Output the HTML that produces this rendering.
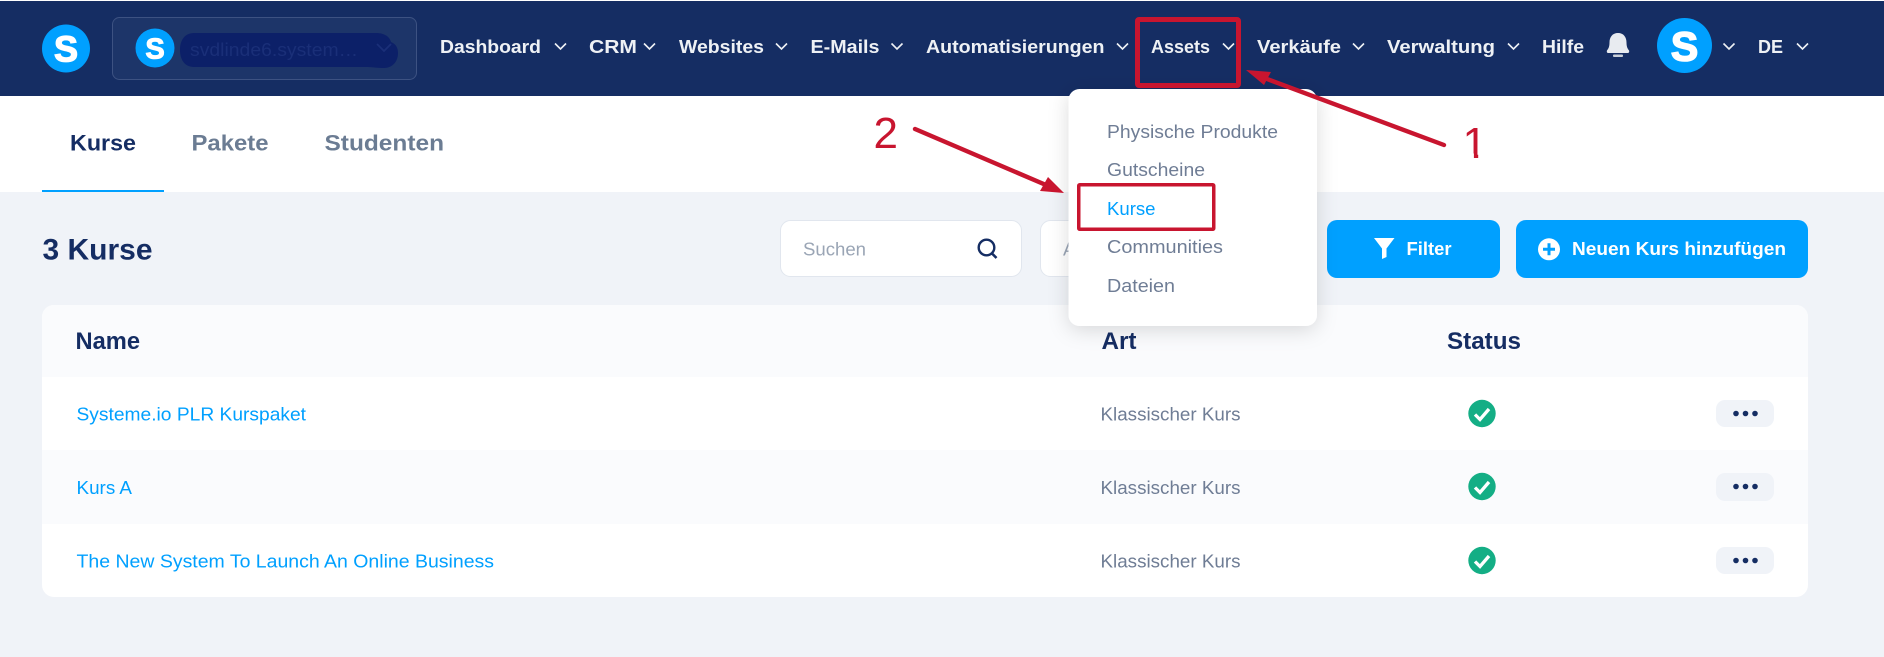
<!DOCTYPE html>
<html lang="de">
<head>
<meta charset="utf-8">
<title>Kurse</title>
<style>
html,body{margin:0;padding:0;background:#f0f3f8;width:1884px;height:657px;overflow:hidden}
svg{display:block}
text{font-family:"Liberation Sans",sans-serif}
.nav{font-size:18.5px;font-weight:700;fill:#eef1f5}
.tab{font-size:22.5px;font-weight:700}
.th{font-size:24px;font-weight:700;fill:#152d63}
.link{font-size:18.5px;fill:#00a0ff}
.mut{font-size:18.5px;fill:#6f7d95}
.btn{font-size:18.5px;font-weight:700;fill:#fff}
.chev{fill:none;stroke:#eef1f5;stroke-width:1.6}
.s{font-weight:700;fill:#fff;stroke:#fff;text-anchor:middle}
.num{font-size:44px;fill:#c8152f}
</style>
</head>
<body>
<svg width="1884" height="657" viewBox="0 0 1884 657" xmlns="http://www.w3.org/2000/svg">
<defs>
<filter id="sh" x="-20%" y="-20%" width="140%" height="140%"><feDropShadow dx="0" dy="4" stdDeviation="10" flood-color="#000" flood-opacity=".14"/></filter>
<clipPath id="one"><rect x="1455" y="120" width="35" height="33.500"/><rect x="1473.900" y="150" width="4.300" height="12"/></clipPath>
</defs>
<rect width="1884" height="657" fill="#f0f3f8"/>
<rect width="1884" height="1" fill="#fff"/>
<rect y="1" width="1884" height="95" fill="#152d63"/>
<rect y="96" width="1884" height="96" fill="#fff"/>

<circle cx="66" cy="48.5" r="24" fill="#00a0ff"/>
<text class="s" x="66" y="61.500" font-size="36" stroke-width="1.300">S</text>

<rect x="112.5" y="17.5" width="304" height="62" rx="7" fill="#1d3569" stroke="#3d5282"/>
<circle cx="155" cy="48" r="19.5" fill="#00a0ff"/>
<text class="s" x="155" y="58.500" font-size="29" stroke-width="1">S</text>
<path d="M194 33H376c10 0 14 5 15 9 5 2 7 6 7 11 0 9-6 15-14 15-8 0-12-1-18-1H194c-9 0-14-7-14-17s5-17 14-17z" fill="#0c2068"/>
<text x="190" y="56" font-size="18.5" fill="#1a2f78" textLength="168" lengthAdjust="spacingAndGlyphs">svdlinde6.system…</text>
<path d="M377 44l7 7 7-7" fill="none" stroke="#1a2f78" stroke-width="1.8"/>

<text class="nav" x="440" y="53" textLength="101" lengthAdjust="spacingAndGlyphs">Dashboard</text>
<path class="chev" d="M555 43.5l5.5 5.5 5.5-5.5"/>
<text class="nav" x="589" y="53" textLength="48" lengthAdjust="spacingAndGlyphs">CRM</text>
<path class="chev" d="M644 43.5l5.5 5.5 5.5-5.5"/>
<text class="nav" x="679" y="53" textLength="85" lengthAdjust="spacingAndGlyphs">Websites</text>
<path class="chev" d="M776 43.5l5.5 5.5 5.5-5.5"/>
<text class="nav" x="810.5" y="53" textLength="69" lengthAdjust="spacingAndGlyphs">E-Mails</text>
<path class="chev" d="M891.500 43.500l5.500 5.500 5.500-5.500"/>
<text class="nav" x="926" y="53" textLength="178.500" lengthAdjust="spacingAndGlyphs">Automatisierungen</text>
<path class="chev" d="M1117 43.500l5.500 5.500 5.500-5.500"/>
<text class="nav" x="1151" y="53" textLength="59" lengthAdjust="spacingAndGlyphs">Assets</text>
<path class="chev" d="M1223 43.500l5.500 5.500 5.500-5.500"/>
<text class="nav" x="1257" y="53" textLength="84" lengthAdjust="spacingAndGlyphs">Verkäufe</text>
<path class="chev" d="M1353 43.500l5.500 5.500 5.500-5.500"/>
<text class="nav" x="1387" y="53" textLength="108" lengthAdjust="spacingAndGlyphs">Verwaltung</text>
<path class="chev" d="M1508 43.500l5.500 5.500 5.500-5.500"/>
<text class="nav" x="1542" y="53" textLength="42" lengthAdjust="spacingAndGlyphs">Hilfe</text>
<path d="M1618 33c-5.500 0-8.500 4-8.500 9.500 0 5-1.500 6.500-2.500 8-.5 1 0 2.500 1 2.500h20c1 0 1.500-1.500 1-2.500-1-1.500-2.500-3-2.500-8 0-5.500-3-9.500-8.500-9.500z" fill="#e8ebf0"/>
<rect x="1613" y="54.500" width="10" height="2.500" rx="1" fill="#c9cfd9"/>
<circle cx="1684.500" cy="45.500" r="27.500" fill="#00a0ff"/>
<text class="s" x="1684.500" y="60.500" font-size="41" stroke-width="1.600">S</text>
<path class="chev" d="M1723.500 43.500l5.500 5.500 5.500-5.500"/>
<text class="nav" x="1758" y="53" textLength="25" lengthAdjust="spacingAndGlyphs">DE</text>
<path class="chev" d="M1797 43.500l5.500 5.500 5.500-5.500"/>

<text class="tab" x="70" y="150.500" fill="#152d63" textLength="66" lengthAdjust="spacingAndGlyphs">Kurse</text>
<text class="tab" x="191.500" y="150.500" fill="#6b7c93" textLength="77" lengthAdjust="spacingAndGlyphs">Pakete</text>
<text class="tab" x="324.500" y="150.500" fill="#6b7c93" textLength="119.500" lengthAdjust="spacingAndGlyphs">Studenten</text>
<rect x="42" y="190" width="122" height="2" fill="#00a0ff"/>

<text x="42.500" y="259.300" font-size="30" font-weight="700" fill="#152d63" textLength="110" lengthAdjust="spacingAndGlyphs">3 Kurse</text>

<rect x="780.500" y="220.500" width="241" height="56" rx="10" fill="#fff" stroke="#e1e6ee"/>
<text x="803" y="255.500" font-size="18.500" fill="#9aa5b5" textLength="63" lengthAdjust="spacingAndGlyphs">Suchen</text>
<circle cx="986.500" cy="247.500" r="7.800" fill="none" stroke="#152d63" stroke-width="2.400"/>
<path d="M992 253.500l4.500 4.500" stroke="#152d63" stroke-width="2.600" fill="none"/>
<rect x="1040.500" y="220.500" width="120" height="56" rx="10" fill="#fff" stroke="#e1e6ee"/>
<text x="1063" y="255.500" font-size="18.500" fill="#9aa5b5">A</text>

<rect x="1327" y="220" width="173" height="58" rx="10" fill="#00a0ff"/>
<path d="M1374 238h20.500l-8 10.500v8.500l-4.500 2v-10.500z" fill="#fff"/>
<text class="btn" x="1406.500" y="255" textLength="45" lengthAdjust="spacingAndGlyphs">Filter</text>
<rect x="1516" y="220" width="292" height="58" rx="10" fill="#00a0ff"/>
<circle cx="1549" cy="249.300" r="11" fill="#fff"/>
<path d="M1543 249.300h12M1549 243.300v12" stroke="#00a0ff" stroke-width="3"/>
<text class="btn" x="1572" y="255" textLength="214" lengthAdjust="spacingAndGlyphs">Neuen Kurs hinzufügen</text>

<rect x="42" y="305" width="1766" height="292" rx="12" fill="#fff"/>
<path d="M42 377v-60a12 12 0 0 1 12-12H1796a12 12 0 0 1 12 12v60z" fill="#fafbfd"/>
<rect x="42" y="450" width="1766" height="74" fill="#fafbfd"/>

<text class="th" x="75.500" y="349" textLength="64.500" lengthAdjust="spacingAndGlyphs">Name</text>
<text class="th" x="1101.500" y="349" textLength="35" lengthAdjust="spacingAndGlyphs">Art</text>
<text class="th" x="1447" y="349" textLength="74" lengthAdjust="spacingAndGlyphs">Status</text>

<text class="link" x="76.500" y="420.700" textLength="229.500" lengthAdjust="spacingAndGlyphs">Systeme.io PLR Kurspaket</text>
<text class="link" x="76.500" y="494" textLength="55.500" lengthAdjust="spacingAndGlyphs">Kurs A</text>
<text class="link" x="76.500" y="567.700" textLength="417.500" lengthAdjust="spacingAndGlyphs">The New System To Launch An Online Business</text>
<text class="mut" x="1100.500" y="420.700" textLength="140" lengthAdjust="spacingAndGlyphs">Klassischer Kurs</text>
<text class="mut" x="1100.500" y="494" textLength="140" lengthAdjust="spacingAndGlyphs">Klassischer Kurs</text>
<text class="mut" x="1100.500" y="567.700" textLength="140" lengthAdjust="spacingAndGlyphs">Klassischer Kurs</text>

<g fill="#14ae85"><circle cx="1482" cy="413.500" r="13.700"/><circle cx="1482" cy="486.500" r="13.700"/><circle cx="1482" cy="560.500" r="13.700"/></g>
<g fill="none" stroke="#fff" stroke-width="3.300"><path d="M1475 414.500l5 5 9-10.500"/><path d="M1475 487.500l5 5 9-10.500"/><path d="M1475 561.500l5 5 9-10.500"/></g>

<g fill="#f0f3f8"><rect x="1716" y="400" width="58" height="27" rx="9"/><rect x="1716" y="473" width="58" height="28" rx="9"/><rect x="1716" y="547" width="58" height="27" rx="9"/></g>
<g fill="#152d63">
<circle cx="1736" cy="413.500" r="2.800"/><circle cx="1745.500" cy="413.500" r="2.800"/><circle cx="1755" cy="413.500" r="2.800"/>
<circle cx="1736" cy="486.500" r="2.800"/><circle cx="1745.500" cy="486.500" r="2.800"/><circle cx="1755" cy="486.500" r="2.800"/>
<circle cx="1736" cy="560.500" r="2.800"/><circle cx="1745.500" cy="560.500" r="2.800"/><circle cx="1755" cy="560.500" r="2.800"/>
</g>

<rect x="1068.500" y="89" width="248.500" height="237" rx="11" fill="#fff" filter="url(#sh)"/>
<text class="mut" x="1107" y="138" textLength="171" lengthAdjust="spacingAndGlyphs">Physische Produkte</text>
<text class="mut" x="1107" y="176" textLength="98" lengthAdjust="spacingAndGlyphs">Gutscheine</text>
<text class="link" x="1107" y="215" textLength="48.500" lengthAdjust="spacingAndGlyphs">Kurse</text>
<text class="mut" x="1107" y="253" textLength="116" lengthAdjust="spacingAndGlyphs">Communities</text>
<text class="mut" x="1107" y="292" textLength="68" lengthAdjust="spacingAndGlyphs">Dateien</text>

<rect x="1137.500" y="19.500" width="101" height="66" rx="1.500" fill="none" stroke="#c8152f" stroke-width="5"/>
<rect x="1078.750" y="184.750" width="135" height="44.500" rx="1" fill="none" stroke="#c8152f" stroke-width="3.500"/>

<path d="M1444 145L1267 79" stroke="#c8152f" stroke-width="4.400" stroke-linecap="round" fill="none"/>
<path d="M1246 70L1271 72L1264 85z" fill="#c8152f"/>
<path d="M915 129L1046 185" stroke="#c8152f" stroke-width="4.400" stroke-linecap="round" fill="none"/>
<path d="M1064 193L1048 177L1040 191z" fill="#c8152f"/>
<text class="num" x="873.500" y="148">2</text>
<text class="num" x="1462.500" y="158" clip-path="url(#one)">1</text>
</svg>
</body>
</html>
